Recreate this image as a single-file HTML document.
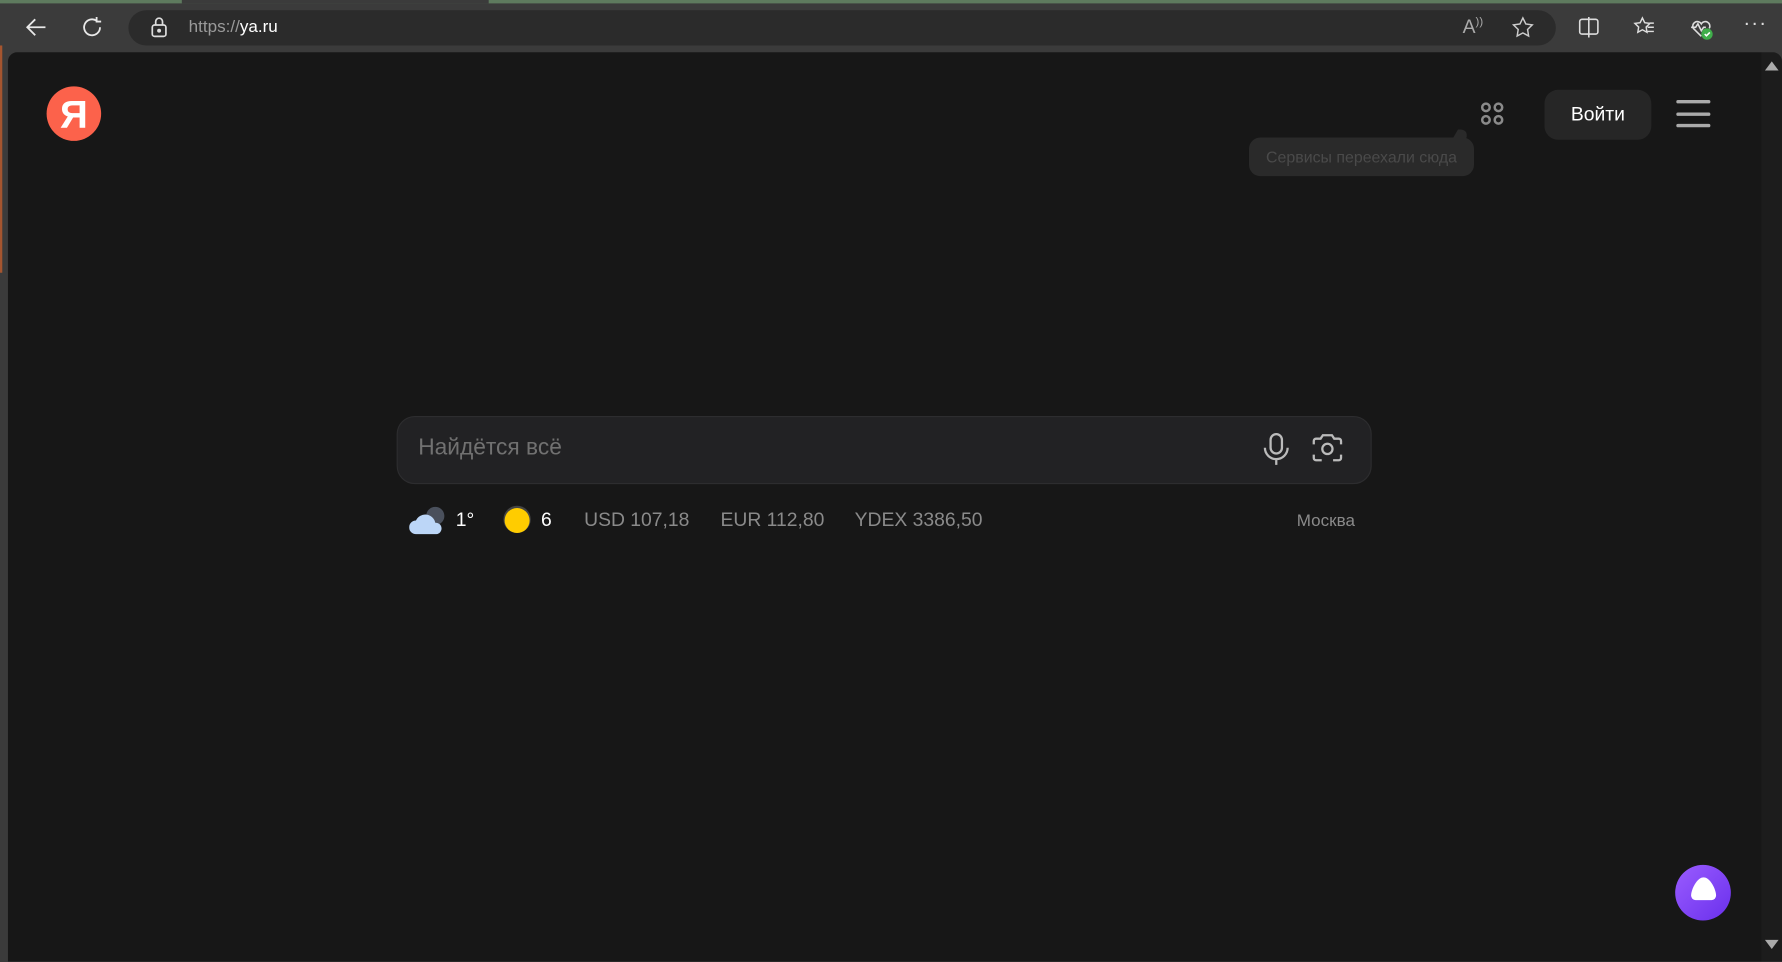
<!DOCTYPE html>
<html><head><meta charset="utf-8"><style>
html,body{margin:0;padding:0;width:1782px;height:962px;overflow:hidden;background:#3a3a3a}
#w{position:absolute;left:0;top:0;width:1568px;height:846px;transform:scale(1.13648);transform-origin:0 0;font-family:"Liberation Sans",sans-serif;background:#3b3b3b}
.a{position:absolute}
</style></head><body><div id="w">
<div class="a" style="left:0;top:0;width:1568px;height:3px;background:#5e7a5e"></div>
<div class="a" style="left:160px;top:0;width:270px;height:3px;background:#3b3b3b"></div>
<div class="a" style="left:0;top:40px;width:2px;height:200px;background:#a5552f"></div>
<!-- nav -->
<svg class="a" style="left:20px;top:12px" width="24" height="24" viewBox="0 0 24 24" fill="none" stroke="#e8e8e8" stroke-width="1.6"><path d="M20 12H5M11 5l-7 7 7 7"/></svg>
<svg class="a" style="left:69px;top:12px" width="24" height="24" viewBox="0 0 24 24" fill="none" stroke="#e8e8e8" stroke-width="1.6"><path d="M19 12a7 7 0 1 1-3-5.7M16 3v4h4"/></svg>
<div class="a" style="left:113px;top:9px;width:1256px;height:31px;border-radius:16px;background:#2b2b2b"></div>
<svg class="a" style="left:131px;top:14px" width="18" height="20" viewBox="0 0 18 20" fill="none" stroke="#ddd" stroke-width="1.5"><rect x="3" y="8" width="12" height="10" rx="2"/><path d="M6 8V5a3 3 0 0 1 6 0v3"/><circle cx="9" cy="13" r="1" fill="#ddd"/></svg>
<div class="a" style="left:166px;top:15px;font-size:15px;color:#9a9a9a">https://<span style="color:#fff">ya.ru</span></div>
<div class="a" style="left:1287px;top:14px;font-size:17px;color:#aaa">A<span style="font-size:10px;vertical-align:top">))</span></div>
<svg class="a" style="left:1329px;top:13px" width="22" height="22" viewBox="0 0 24 24" fill="none" stroke="#ccc" stroke-width="1.4"><path d="M12 3l2.8 5.8 6.2.9-4.5 4.4 1 6.3L12 17.4 6.5 20.4l1-6.3L3 9.7l6.2-.9z"/></svg>
<svg class="a" style="left:1388px;top:14px" width="20" height="20" viewBox="0 0 20 20" fill="none" stroke="#ddd" stroke-width="1.4"><rect x="2" y="3" width="16" height="13" rx="2"/><path d="M10 1v18"/></svg>
<svg class="a" style="left:1436px;top:13px" width="22" height="22" viewBox="0 0 24 24" fill="none" stroke="#ddd" stroke-width="1.4"><path d="M10 3l2.2 4.6 5 .7-3.6 3.5.8 5L10 14.4 5.6 16.8l.8-5L2.8 8.3l5-.7z M15 12h6M15 16h6M17 8h4"/></svg>
<svg class="a" style="left:1485px;top:13px" width="24" height="24" viewBox="0 0 24 24" fill="none" stroke="#ddd" stroke-width="1.4"><path d="M12 19l-7-7a4 4 0 0 1 7-4 4 4 0 0 1 7 4M3 11h4l2-3 3 6 2-3h2"/><circle cx="17" cy="17" r="5" fill="#3fae4a" stroke="none"/><path d="M15 17l1.5 1.5 3-3" stroke="#fff"/></svg>
<div class="a" style="left:1534px;top:10px;font-size:18px;color:#ddd;letter-spacing:1px">···</div>
<!-- page -->
<div class="a" style="left:7px;top:46px;width:1543px;height:800px;background:#171717;border-top-left-radius:8px"></div>
<div class="a" style="left:1550px;top:46px;width:18px;height:800px;background:#1c1c1c;border-top-right-radius:8px"></div>
<div class="a" style="left:1553px;top:54px;width:0;height:0;border-left:6px solid transparent;border-right:6px solid transparent;border-bottom:8px solid #aaa"></div>
<div class="a" style="left:1553px;top:827px;width:0;height:0;border-left:6px solid transparent;border-right:6px solid transparent;border-top:8px solid #aaa"></div>
<div class="a" style="left:41px;top:76px;width:48px;height:48px;border-radius:50%;background:#fc624b;color:#fff;font-size:34px;font-weight:bold;text-align:center;line-height:50px">Я</div>
<svg class="a" style="left:1302px;top:89px" width="22" height="22" viewBox="0 0 22 22" fill="none" stroke="#8a8a8a" stroke-width="2.2"><circle cx="5.5" cy="5.5" r="3.3"/><circle cx="16.5" cy="5.5" r="3.3"/><circle cx="5.5" cy="16.5" r="3.3"/><circle cx="16.5" cy="16.5" r="3.3"/></svg>
<div class="a" style="left:1359px;top:79px;width:94px;height:44px;border-radius:12px;background:#262626;color:#fff;font-size:17px;text-align:center;line-height:44px">Войти</div>
<div class="a" style="left:1475px;top:88px;width:30px;height:3px;background:#aaa;border-radius:2px"></div>
<div class="a" style="left:1475px;top:99px;width:30px;height:3px;background:#aaa;border-radius:2px"></div>
<div class="a" style="left:1475px;top:109px;width:30px;height:3px;background:#aaa;border-radius:2px"></div>
<div class="a" style="left:1099px;top:121px;width:198px;height:34px;border-radius:10px;background:#2a2a2a;color:#4a4a4a;font-size:14px;text-align:center;line-height:34px">Сервисы переехали сюда</div>
<div class="a" style="left:1280px;top:114px;width:12px;height:10px;background:#2a2a2a;border-top-right-radius:10px;transform:skewX(-30deg)"></div>
<!-- search -->
<div class="a" style="left:349px;top:366px;width:856px;height:58px;border-radius:16px;background:#222224;border:1px solid #2d2d2f"></div>
<div class="a" style="left:368px;top:383px;font-size:20px;color:#717171">Найдётся всё</div>
<svg class="a" style="left:1110px;top:380px" width="26" height="30" viewBox="0 0 26 30" fill="none" stroke="#bbb" stroke-width="2"><rect x="8" y="2" width="10" height="17" rx="5"/><path d="M3 14a10 10 0 0 0 20 0M13 24v5"/></svg>
<svg class="a" style="left:1153px;top:380px" width="30" height="30" viewBox="0 0 30 30" fill="none" stroke="#bbb" stroke-width="2"><path d="M3 11V8a2 2 0 0 1 2-2h4l2-3h8l2 3h4a2 2 0 0 1 2 2v3M3 20v3a2 2 0 0 0 2 2h5M27 20v3a2 2 0 0 1-2 2h-5"/><circle cx="15" cy="15" r="4.5"/></svg>
<!-- info -->
<svg class="a" style="left:360px;top:443px" width="34" height="28" viewBox="0 0 34 28"><circle cx="23" cy="11" r="8" fill="#4a505c"/><path d="M6 27a6 6 0 0 1 0-12 9 9 0 0 1 17 2 5 5 0 0 1 1 10z" fill="#bcd6f7"/></svg>
<div class="a" style="left:401px;top:448px;font-size:17px;color:#fff">1°</div>
<svg class="a" style="left:442px;top:444px" width="26" height="26" viewBox="0 0 26 26"><circle cx="13" cy="13" r="12" fill="#444"/><circle cx="13" cy="14" r="11" fill="#ffcc00"/><circle cx="10" cy="6" r="6" fill="#444" opacity=".0"/></svg>
<div class="a" style="left:476px;top:448px;font-size:17px;color:#fff">6</div>
<div class="a" style="left:514px;top:448px;font-size:17px;color:#8a8a8a">USD 107,18</div>
<div class="a" style="left:634px;top:448px;font-size:17px;color:#8a8a8a">EUR 112,80</div>
<div class="a" style="left:752px;top:448px;font-size:17px;color:#8a8a8a">YDEX 3386,50</div>
<div class="a" style="left:1141px;top:450px;font-size:15px;color:#8a8a8a">Москва</div>
<!-- alice -->
<div class="a" style="left:1474px;top:761px;width:49px;height:49px;border-radius:50%;background:linear-gradient(135deg,#9a5cff,#6a30ec)"></div>
<svg class="a" style="left:1484px;top:768px" width="30" height="30" viewBox="0 0 30 30"><path d="M15 4C9 4 4 15 4 20a4 4 0 0 0 4 4h14a4 4 0 0 0 4-4C26 15 21 4 15 4z" fill="#fff"/></svg>
</div></body></html>
